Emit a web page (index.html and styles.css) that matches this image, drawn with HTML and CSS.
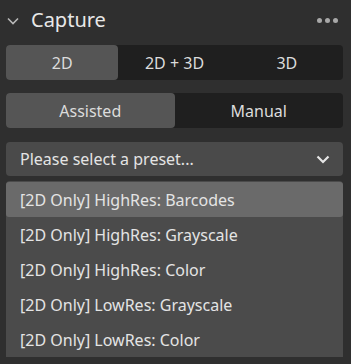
FILE: index.html
```html
<!DOCTYPE html>
<html lang="en">
<head>
  <meta charset="UTF-8">
  <title>Capture</title>
  <link rel="stylesheet" href="styles.css">
</head>
<body>
  <div class="panel">
    <div class="panel-header">
      <svg class="caret" width="12" height="8" viewBox="0 0 12 8">
        <path d="M1 1.5 L6 6.5 L11 1.5" fill="none" stroke="#b8b8b8" stroke-width="1.6"/>
      </svg>
      <span class="title">Capture</span>
      <span class="more"><i></i><i></i><i></i></span>
    </div>

    <div class="segmented three">
      <div class="seg active">2D</div>
      <div class="seg">2D + 3D</div>
      <div class="seg">3D</div>
    </div>

    <div class="segmented two">
      <div class="seg active">Assisted</div>
      <div class="seg">Manual</div>
    </div>

    <div class="select">
      <span>Please select a preset...</span>
      <svg width="14" height="9" viewBox="0 0 14 9">
        <path d="M1.5 1.5 L7 7 L12.5 1.5" fill="none" stroke="#e6e6e6" stroke-width="2.2"/>
      </svg>
    </div>

    <ul class="options">
      <li class="hover">[2D Only] HighRes: Barcodes</li>
      <li>[2D Only] HighRes: Grayscale</li>
      <li>[2D Only] HighRes: Color</li>
      <li>[2D Only] LowRes: Grayscale</li>
      <li>[2D Only] LowRes: Color</li>
    </ul>
  </div>
</body>
</html>
```

FILE: styles.css
```css
body {
  margin: 0;
  background-color: #2f2f2f;
  font-family: "Noto Sans", sans-serif;
  color: #e4e4e4;
}

.panel {
  padding: 0 8px 0 6px;
}

.panel-header {
  display: flex;
  align-items: center;
  height: 40px;
}

.caret {
  margin: 2px 12px 0 1px;
}

.title {
  font-size: 20px;
  color: #e8e8e8;
  flex: 1;
  margin-top: -2px;
}

.more {
  display: flex;
  gap: 3px;
  margin-right: 5px;
}

.more i {
  width: 5px;
  height: 5px;
  border-radius: 50%;
  background-color: #a8a8a8;
}

.segmented {
  display: flex;
  background-color: #1f1f1f;
  border-radius: 4px;
  height: 35px;
  margin-top: 5px;
}

.segmented.two {
  margin-top: 13px;
}

.seg {
  flex: 1;
  display: flex;
  align-items: center;
  justify-content: center;
  font-size: 16px;
  color: #dcdcdc;
  border-radius: 4px;
}

.seg.active {
  background-color: #555555;
}

.select {
  display: flex;
  align-items: center;
  justify-content: space-between;
  height: 34px;
  margin-top: 14px;
  padding: 0 13px 0 14px;
  background-color: #4a4a4a;
  border-radius: 4px;
  font-size: 16px;
}

.options {
  list-style: none;
  margin: 5px 0 0;
  padding: 1px 0 0;
  background-color: #4b4b4b;
  border-radius: 4px 4px 0 0;
}

.options li {
  height: 35px;
  line-height: 36px;
  padding-left: 14px;
  font-size: 16px;
}

.options li.hover {
  background-color: #6a6a6a;
  border-radius: 3px;
}
```
